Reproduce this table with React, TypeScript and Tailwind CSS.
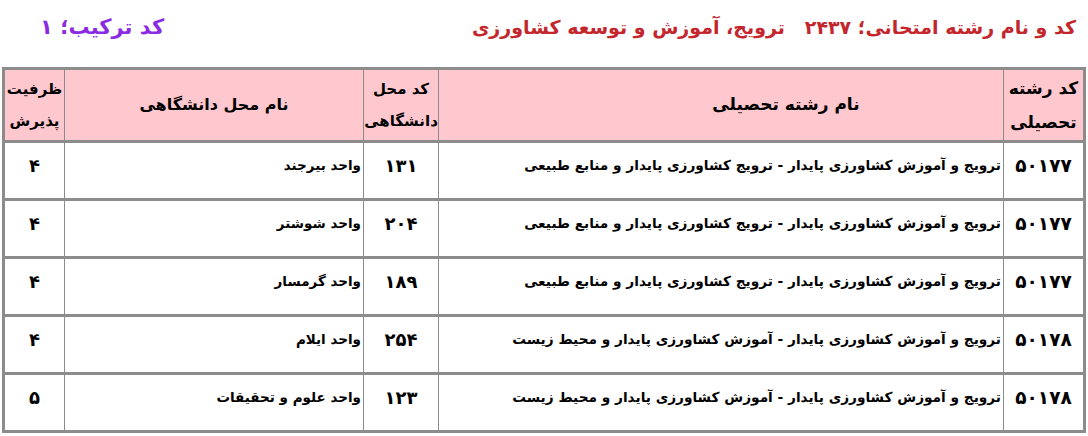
import React from "react";

const rows = [
  { code: "۵۰۱۷۷", name: "ترویج و آموزش کشاورزی پایدار - ترویج کشاورزی پایدار و منابع طبیعی", loc: "۱۳۱", place: "واحد بیرجند", cap: "۴" },
  { code: "۵۰۱۷۷", name: "ترویج و آموزش کشاورزی پایدار - ترویج کشاورزی پایدار و منابع طبیعی", loc: "۲۰۴", place: "واحد شوشتر", cap: "۴" },
  { code: "۵۰۱۷۷", name: "ترویج و آموزش کشاورزی پایدار - ترویج کشاورزی پایدار و منابع طبیعی", loc: "۱۸۹", place: "واحد گرمسار", cap: "۴" },
  { code: "۵۰۱۷۸", name: "ترویج و آموزش کشاورزی پایدار - آموزش کشاورزی پایدار و محیط زیست", loc: "۲۵۴", place: "واحد ایلام", cap: "۴" },
  { code: "۵۰۱۷۸", name: "ترویج و آموزش کشاورزی پایدار - آموزش کشاورزی پایدار و محیط زیست", loc: "۱۲۳", place: "واحد علوم و تحقیقات", cap: "۵" },
];

export default function App() {
  return (
    <div
      dir="rtl"
      className="w-[1088px] h-[436px] bg-white overflow-hidden"
      style={{ fontFamily: '"DejaVu Sans", Tahoma, sans-serif' }}
    >
      <div className="flex items-center justify-between h-[67px] pr-[12px] pl-[40px] pb-[12px] font-bold">
        <div className="text-[#c3262d] text-[19px]">
          کد و نام رشته امتحانی؛ ۲۴۳۷&nbsp;&nbsp; ترویج، آموزش و توسعه کشاورزی
        </div>
        <div className="text-[#8a2be2] text-[21px]">کد ترکیب؛ ۱</div>
      </div>
      <div className="px-[2px]">
        <table className="w-[1084px] border-collapse border-[3px] border-[#8c8c8c] table-fixed">
          <colgroup>
            <col className="w-[81px]" />
            <col className="w-[565px]" />
            <col className="w-[75px]" />
            <col className="w-[299px]" />
            <col className="w-[61px]" />
          </colgroup>
          <thead>
            <tr className="h-[73px] bg-[#ffc7ce] text-[17px] font-bold text-black">
              <th className="border-x border-[#8c8c8c] border-b-[3px] leading-[34px] text-center font-bold">
                کد رشته
                <br />
                تحصیلی
              </th>
              <th className="border-x border-[#8c8c8c] border-b-[3px] text-center font-bold pl-[130px]">نام رشته تحصیلی</th>
              <th className="border-x border-[#8c8c8c] border-b-[3px] leading-[32px] text-center font-bold text-[15px]">
                کد محل
                <br />
                دانشگاهی
              </th>
              <th className="border-x border-[#8c8c8c] border-b-[3px] text-center font-bold text-[16px]">نام محل دانشگاهی</th>
              <th className="border-x border-[#8c8c8c] border-b-[3px] leading-[32px] text-center font-bold text-[15px]">
                ظرفیت
                <br />
                پذیرش
              </th>
            </tr>
          </thead>
          <tbody>
            {rows.map((r, i) => (
              <tr key={i} className="h-[58px] text-black">
                <td className="border-x border-[#8c8c8c] border-b-[3px] text-center align-middle pb-[10px] text-[18.5px] font-bold">{r.code}</td>
                <td className="border-x border-[#8c8c8c] border-b-[3px] align-middle pb-[10px] pr-[2px] text-[13.7px] font-bold whitespace-nowrap">{r.name}</td>
                <td className="border-x border-[#8c8c8c] border-b-[3px] text-center align-middle pb-[10px] text-[18px] font-bold">{r.loc}</td>
                <td className="border-x border-[#8c8c8c] border-b-[3px] align-middle pb-[10px] pr-[2px] text-[13.5px] font-bold whitespace-nowrap">{r.place}</td>
                <td className="border-x border-[#8c8c8c] border-b-[3px] text-center align-middle pb-[10px] text-[18px] font-bold">{r.cap}</td>
              </tr>
            ))}
          </tbody>
        </table>
      </div>
    </div>
  );
}
